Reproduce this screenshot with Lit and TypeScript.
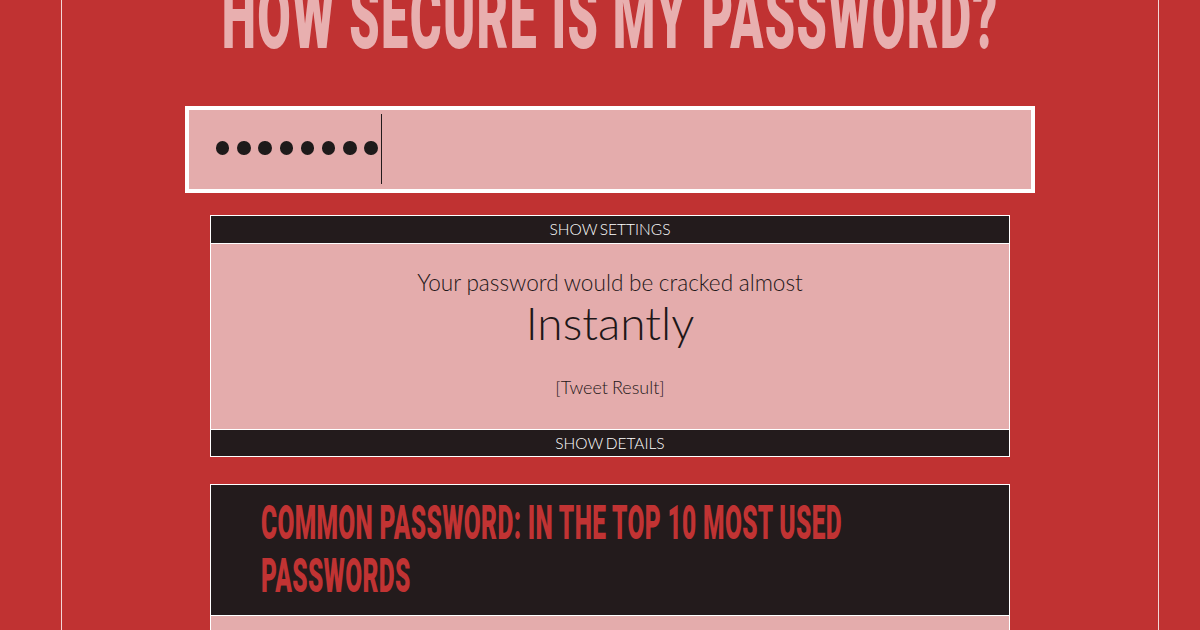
import { LitElement, html, css } from "lit";
import { customElement } from "lit/decorators.js";

@customElement("app-root")
export class AppRoot extends LitElement {
  static styles = css`
    :host { display: block; height: 630px; overflow: hidden; background: #c03232; font-family: Lato, "Open Sans", sans-serif; }
    .frame { margin: 0 41px 0 61px; height: 630px; box-sizing: border-box; border-left: 1.5px solid #f3d6d6; border-right: 1.5px solid #f3d6d6; display: flex; flex-direction: column; align-items: center; overflow: hidden; }
    h1, h2 { margin: 0; font-family: Roboto, "Liberation Sans", sans-serif; font-weight: 900; white-space: nowrap; }
    h1 { height: 106px; margin-top: -27px; font-size: 90px; line-height: 90px; color: #e8afaf; flex: none; transform: scaleX(0.54); letter-spacing: 2.5px; }
    .input { flex: none; box-sizing: border-box; width: 850px; height: 87px; margin-top: 27px; background: #e4acac; border: 4px solid #fff; padding: 4px 0 5px 27px; display: flex; align-items: center; gap: 7.8px; }
    .dot { width: 13.4px; height: 14px; margin-top: -2.5px; border-radius: 50%; background: #1e1a1a; flex: none; }
    .caret { width: 1px; height: 70px; background: #231b1c; margin-left: -4.8px; flex: none; }
    .box { flex: none; box-sizing: border-box; width: 800px; border: 1px solid #fff; }
    .results { margin-top: 22px; height: 242px; display: flex; flex-direction: column; }
    .bar { background: #231b1c; color: #fff; height: 27px; flex: none; font-size: 15.5px; font-weight: 300; line-height: 27px; text-align: center; word-spacing: -1.5px; }
    .bar.low { height: 26px; line-height: 26px; }
    .body { flex: 1; background: #e4acac; border-top: 1px solid #fff; border-bottom: 1px solid #fff; color: #1e1718; font-weight: 300; text-align: center; display: flex; flex-direction: column; align-items: center; }
    .lead { font-size: 22.6px; line-height: 26px; margin-top: 26px; word-spacing: -0.5px; }
    .time { font-size: 46px; line-height: 54px; margin-top: 0; }
    .tweet { font-size: 18px; line-height: 20px; margin-top: 27px; word-spacing: -1px; }
    .common { margin-top: 27px; height: 240px; background: #e4acac; }
    .head { box-sizing: border-box; height: 131px; background: #231b1c; border-bottom: 1px solid #fff; padding: 11px 0 0 50px; }
    h2 { font-size: 49px; line-height: 53px; color: #c13333; transform: scaleX(0.5); transform-origin: 0 0; width: 1200px; letter-spacing: 0.7px; }
  `;

  render() {
    return html`<div class="frame">
      <h1>HOW SECURE IS MY PASSWORD?</h1>
      <div class="input">
        ${Array.from({ length: 8 }, () => html`<span class="dot"></span>`)}
        <span class="caret"></span>
      </div>
      <div class="box results">
        <div class="bar">SHOW SETTINGS</div>
        <div class="body">
          <div class="lead">Your password would be cracked almost</div>
          <div class="time">Instantly</div>
          <div class="tweet">[Tweet Result]</div>
        </div>
        <div class="bar low">SHOW DETAILS</div>
      </div>
      <div class="box common">
        <div class="head">
          <h2>COMMON PASSWORD: IN THE TOP 10 MOST USED<br />PASSWORDS</h2>
        </div>
      </div>
    </div>`;
  }
}
